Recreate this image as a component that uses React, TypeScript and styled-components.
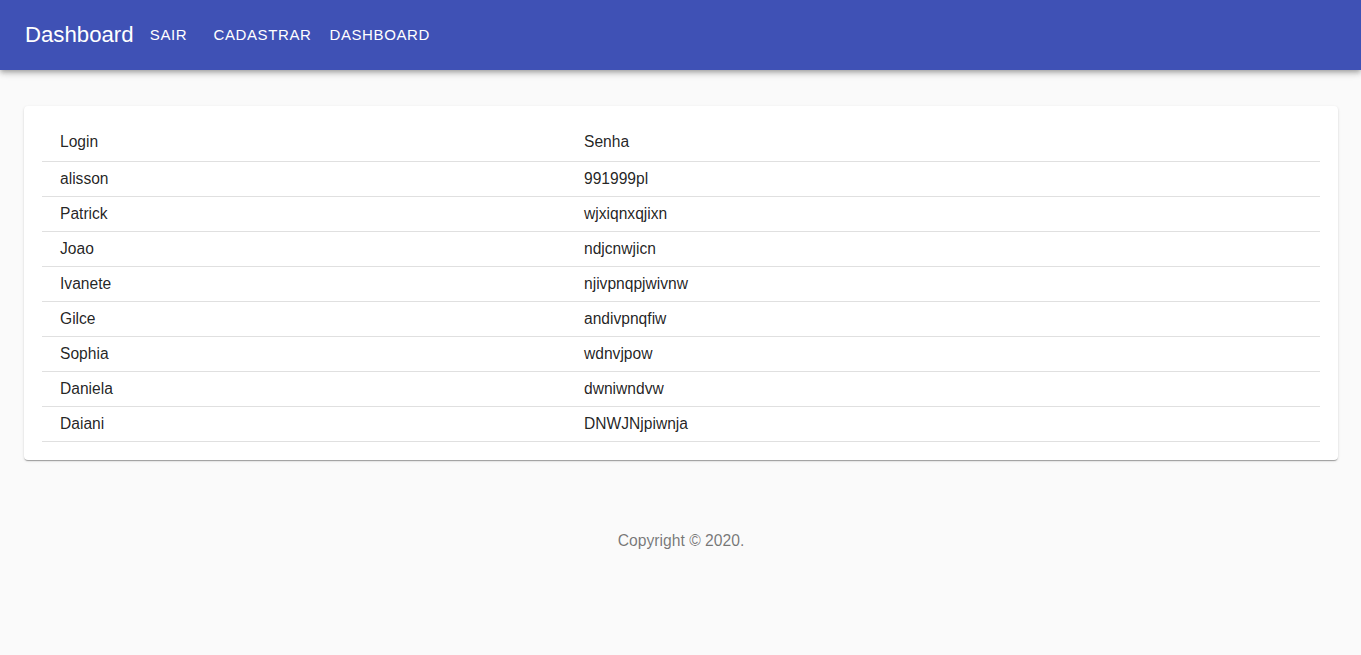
import React from "react";
import styled, { createGlobalStyle } from "styled-components";

const GlobalStyle = createGlobalStyle`
  html, body { margin: 0; padding: 0; background: #fafafa; }
  body { font-family: "Liberation Sans", Arial, sans-serif; color: rgba(0,0,0,0.87); }
`;

const AppBar = styled.header`
  height: 70px;
  background: #3f51b5;
  color: #fff;
  display: flex;
  align-items: center;
  padding: 0 24px;
  box-shadow: 0px 2px 4px -1px rgba(0,0,0,0.2), 0px 4px 5px 0px rgba(0,0,0,0.14), 0px 1px 10px 0px rgba(0,0,0,0.12);
  position: relative;
  z-index: 2;
`;

const Title = styled.h1`
  margin: 0 3px 0 1px;
  font-size: 22.2px;
  font-weight: 400;
  line-height: 1;
`;

const NavButton = styled.a`
  min-width: 64px;
  box-sizing: border-box;
  padding: 6px 8px;
  margin-right: ${(p: { $gap?: number }) => p.$gap ?? 2}px;
  font-size: 15px;
  letter-spacing: 0.6px;
  text-transform: uppercase;
  text-align: center;
  color: #fff;
  line-height: 1.5;
`;

const Main = styled.main`
  padding: 36px 23px 0 24px;
`;

const Card = styled.section`
  background: #fff;
  border-radius: 4px;
  box-shadow: 0px 2px 1px -1px rgba(0,0,0,0.2), 0px 1px 1px 0px rgba(0,0,0,0.14), 0px 1px 3px 0px rgba(0,0,0,0.12);
  padding: 18px 18px 18px 18px;
`;

const Table = styled.table`
  width: 100%;
  border-collapse: collapse;
  table-layout: fixed;
  font-size: 15.6px;
`;

const HeadCell = styled.th`
  text-align: left;
  font-weight: 400;
  height: 37px;
  padding: 0 18px;
  border-bottom: 1px solid rgb(224,224,224);
  width: ${(p: { $w?: number }) => (p.$w ? `${p.$w}px` : "auto")};
  box-sizing: border-box;
`;

const Cell = styled.td`
  height: 34px;
  padding: 0 18px;
  border-bottom: 1px solid rgb(224,224,224);
`;

const Footer = styled.footer`
  margin-top: 71px;
  text-align: center;
  color: rgba(0,0,0,0.54);
  font-size: 15.7px;
  line-height: 20px;
`;

const rows = [
  ["alisson", "991999pl"],
  ["Patrick", "wjxiqnxqjixn"],
  ["Joao", "ndjcnwjicn"],
  ["Ivanete", "njivpnqpjwivnw"],
  ["Gilce", "andivpnqfiw"],
  ["Sophia", "wdnvjpow"],
  ["Daniela", "dwniwndvw"],
  ["Daiani", "DNWJNjpiwnja"],
];

export default function App() {
  return (
    <>
      <GlobalStyle />
      <AppBar>
        <Title>Dashboard</Title>
        <NavButton $gap={5}>Sair</NavButton>
        <NavButton $gap={2}>Cadastrar</NavButton>
        <NavButton>Dashboard</NavButton>
      </AppBar>
      <Main>
        <Card>
          <Table>
            <thead>
              <tr>
                <HeadCell $w={524}>Login</HeadCell>
                <HeadCell>Senha</HeadCell>
              </tr>
            </thead>
            <tbody>
              {rows.map(([l, s]) => (
                <tr key={l}>
                  <Cell>{l}</Cell>
                  <Cell>{s}</Cell>
                </tr>
              ))}
            </tbody>
          </Table>
        </Card>
        <Footer>Copyright © 2020.</Footer>
      </Main>
    </>
  );
}
